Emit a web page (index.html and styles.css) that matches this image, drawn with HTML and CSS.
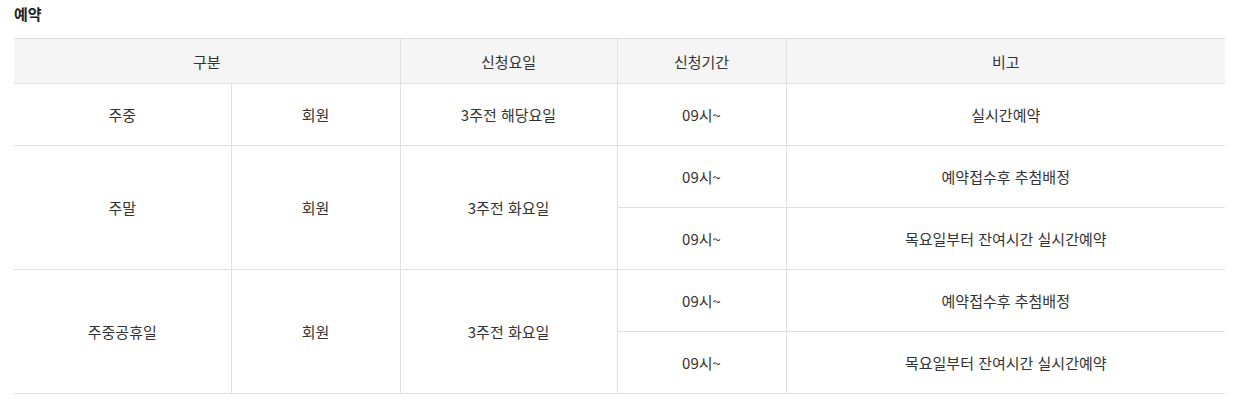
FILE: index.html
```html
<!DOCTYPE html>
<html lang="ko">
<head>
    <meta charset="UTF-8">
    <meta name="viewport" content="width=device-width, initial-scale=1.0">
    <title>예약</title>
    <link rel="stylesheet" href="styles.css">
</head>
<body>
    <div class="section">
        <h3 class="title">예약</h3>
        <table class="rsv-table">
            <colgroup>
                <col class="c1">
                <col class="c2">
                <col class="c3">
                <col class="c4">
                <col class="c5">
            </colgroup>
            <thead>
                <tr>
                    <th colspan="2">구분</th>
                    <th>신청요일</th>
                    <th>신청기간</th>
                    <th>비고</th>
                </tr>
            </thead>
            <tbody>
                <tr>
                    <td>주중</td>
                    <td>회원</td>
                    <td>3주전 해당요일</td>
                    <td>09시~</td>
                    <td>실시간예약</td>
                </tr>
                <tr>
                    <td rowspan="2">주말</td>
                    <td rowspan="2">회원</td>
                    <td rowspan="2">3주전 화요일</td>
                    <td>09시~</td>
                    <td>예약접수후 추첨배정</td>
                </tr>
                <tr>
                    <td>09시~</td>
                    <td>목요일부터 잔여시간 실시간예약</td>
                </tr>
                <tr>
                    <td rowspan="2">주중공휴일</td>
                    <td rowspan="2">회원</td>
                    <td rowspan="2">3주전 화요일</td>
                    <td>09시~</td>
                    <td>예약접수후 추첨배정</td>
                </tr>
                <tr>
                    <td>09시~</td>
                    <td>목요일부터 잔여시간 실시간예약</td>
                </tr>
            </tbody>
        </table>
    </div>
</body>
</html>
```

FILE: styles.css
```css
* {
    margin: 0;
    padding: 0;
    box-sizing: border-box;
}
body {
    font-family: "Noto Sans CJK KR", "Noto Sans", sans-serif;
    color: #333;
    background: #fff;
}
.section {
    padding: 4px 9px 0 14px;
}
.title {
    font-size: 15px;
    font-weight: bold;
    color: #222;
    line-height: 20px;
    margin-bottom: 14px;
}
.rsv-table {
    width: 1211px;
    border-collapse: collapse;
    table-layout: fixed;
    border-top: 1px solid #ddd;
}
.rsv-table .c1 { width: 217px; }
.rsv-table .c2 { width: 169px; }
.rsv-table .c3 { width: 217px; }
.rsv-table .c4 { width: 169px; }
.rsv-table .c5 { width: 439px; }
.rsv-table th,
.rsv-table td {
    font-size: 15px;
    font-weight: normal;
    text-align: center;
    vertical-align: middle;
    border-bottom: 1px solid #e0e0e0;
    border-left: 1px solid #e0e0e0;
}
.rsv-table th:first-child,
.rsv-table tbody tr:nth-child(1) td:first-child,
.rsv-table tbody tr:nth-child(2) td:first-child,
.rsv-table tbody tr:nth-child(4) td:first-child {
    border-left: none;
}
.rsv-table th {
    height: 45px;
    background: #f5f5f5;
}
.rsv-table td {
    height: 62px;
}
```
